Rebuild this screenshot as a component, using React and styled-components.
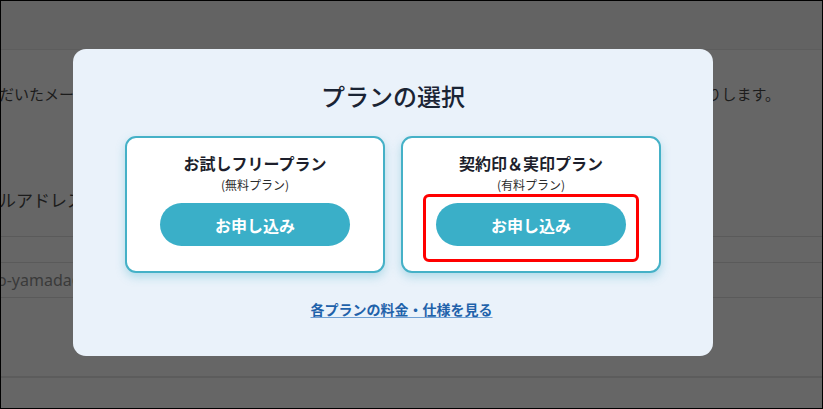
import styled, { createGlobalStyle } from "styled-components";

const GlobalStyle = createGlobalStyle`
  html, body {
    margin: 0;
    padding: 0;
    background: #ffffff;
  }
  * {
    box-sizing: border-box;
  }
  body {
    font-family: "Noto Sans CJK JP", "Noto Sans", sans-serif;
  }
`;

const plans = [
  { name: "お試しフリープラン", note: "(無料プラン)", marked: false },
  { name: "契約印＆実印プラン", note: "(有料プラン)", marked: true },
];

const App = () => {
  return (
    <>
      <GlobalStyle />
      <Frame>
        <Page>
          <Header />
          <Notice>
            <NoticeLeft>ご入力いただいたメール</NoticeLeft>
            <NoticeRight>メールをお送りします。</NoticeRight>
          </Notice>
          <LabelRow>
            <Label>メールアドレス</Label>
          </LabelRow>
          <BlankRow />
          <InputRow>
            <InputText>taro-yamada@example.com</InputText>
          </InputRow>
          <Spacer />
          <Footer />
        </Page>

        <Overlay>
          <Modal>
            <Title>プランの選択</Title>
            <Cards>
              {plans.map((plan) => (
                <Card key={plan.name}>
                  <CardTitle>{plan.name}</CardTitle>
                  <CardNote>{plan.note}</CardNote>
                  <ApplyButton>お申し込み</ApplyButton>
                  {plan.marked && <Marker />}
                </Card>
              ))}
            </Cards>
            <DetailLink href="#">各プランの料金・仕様を見る</DetailLink>
          </Modal>
        </Overlay>
      </Frame>
    </>
  );
};
export default App;

const Frame = styled.div`
  position: relative;
  width: 823px;
  height: 409px;
  border: 1px solid #000;
  overflow: hidden;
  background: #666666;
`;

const Page = styled.div`
  display: flex;
  flex-direction: column;
  height: 100%;
`;

const Header = styled.div`
  height: 49px;
  background: #636363;
  border-bottom: 1px solid #5d5d5d;
`;

const Notice = styled.div`
  height: 86px;
  display: flex;
  align-items: center;
  justify-content: space-between;
  padding-right: 42px;
  font-size: 15px;
  color: #1c1c1c;
  white-space: nowrap;
  overflow: hidden;
`;

const NoticeLeft = styled.span`
  margin-left: -77px;
`;

const NoticeRight = styled.span``;

const LabelRow = styled.div`
  height: 101px;
  padding-top: 50px;
  border-bottom: 1px solid #5a5a5a;
  overflow: hidden;
`;

const Label = styled.div`
  margin-left: -36px;
  font-size: 17px;
  line-height: 28px;
  color: #1c1c1c;
  white-space: nowrap;
`;

const BlankRow = styled.div`
  height: 26px;
  border-bottom: 1px solid #5a5a5a;
`;

const InputRow = styled.div`
  height: 35px;
  display: flex;
  align-items: center;
  border-bottom: 1px solid #5a5a5a;
  overflow: hidden;
`;

const InputText = styled.span`
  margin-left: -25px;
  font-family: "Noto Sans", "Noto Sans CJK JP", sans-serif;
  font-size: 16px;
  color: #3a3a3a;
  white-space: nowrap;
`;

const Spacer = styled.div`
  height: 78px;
`;

const Footer = styled.div`
  flex: 1;
  border-top: 2px solid #5c5c5c;
  background: #666666;
`;

const Overlay = styled.div`
  position: absolute;
  inset: 0;
  padding: 48px 0 0 72px;
`;

const Modal = styled.div`
  width: 640px;
  height: 307px;
  background: #eaf2fa;
  border-radius: 13px;
  padding-top: 30px;
  display: flex;
  flex-direction: column;
  align-items: center;
`;

const Title = styled.h2`
  margin: 0;
  font-size: 24px;
  line-height: 34px;
  font-weight: 500;
  color: #1a2434;
`;

const Cards = styled.div`
  margin-top: 23px;
  display: flex;
  gap: 16px;
`;

const Card = styled.div`
  position: relative;
  width: 260px;
  height: 137px;
  padding-top: 14px;
  background: #ffffff;
  border: 2px solid #45b1c7;
  border-radius: 11px;
  box-shadow: 0 4px 10px rgba(70, 175, 200, 0.35);
  display: flex;
  flex-direction: column;
  align-items: center;
`;

const CardTitle = styled.div`
  font-size: 16px;
  line-height: 22px;
  font-weight: 700;
  color: #1d1f2c;
`;

const CardNote = styled.div`
  margin-top: 3px;
  font-size: 12px;
  line-height: 16px;
  color: #2c2c2c;
`;

const ApplyButton = styled.button`
  margin-top: 10px;
  width: 190px;
  height: 43px;
  border: none;
  border-radius: 22px;
  background: #3aafc8;
  color: #ffffff;
  font-family: "Noto Sans CJK JP", sans-serif;
  font-size: 16px;
  font-weight: 700;
  cursor: pointer;
`;

const Marker = styled.div`
  position: absolute;
  left: 20px;
  top: 56px;
  width: 216px;
  height: 68px;
  border: 3px solid #ff0000;
  border-radius: 6px;
  pointer-events: none;
`;

const DetailLink = styled.a`
  margin-top: 26px;
  margin-left: 17px;
  font-size: 14px;
  line-height: 20px;
  font-weight: 700;
  color: #1f62aa;
  text-decoration: underline;
  text-decoration-color: #6fa0d4;
  text-underline-offset: 2px;
`;
